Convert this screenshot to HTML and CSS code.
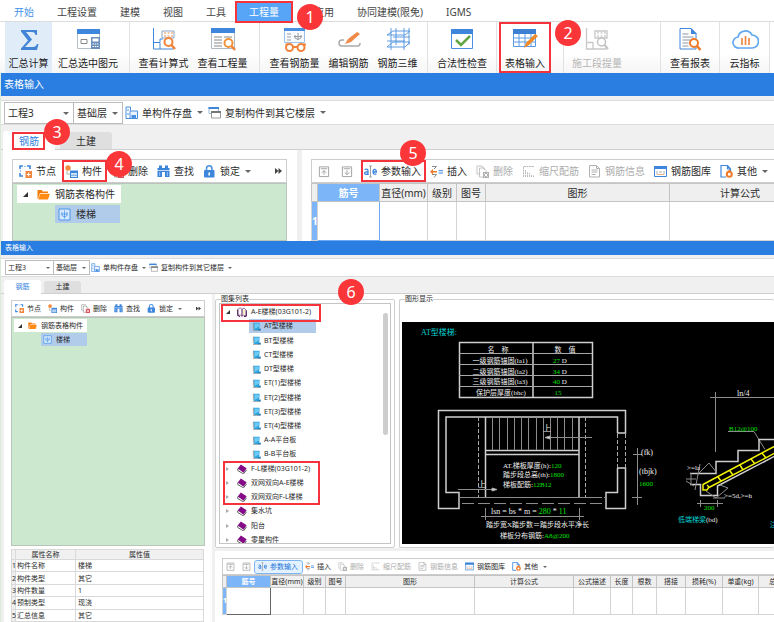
FILE: index.html
```html
<!DOCTYPE html>
<html lang="zh-CN">
<head>
<meta charset="utf-8">
<title>表格输入</title>
<link rel="stylesheet" href="styles.css">
</head>
<body>
<svg class="defs" aria-hidden="true">
  <symbol id="node" viewBox="0 0 13 13"><path d="M1 4V1h3M8 1h3v3M1 8v3h3" fill="none" stroke="#3d86dc" stroke-width="1.600"/><path d="M5 1.500h2M1.500 5v2" stroke="#9cc3ef"/><rect x="6.500" y="6" width="6.500" height="7" fill="#f0843a"/><path d="M9.700 7.500v4M7.700 9.500h4" stroke="#fff"/></symbol>
  <symbol id="part" viewBox="0 0 13 13"><circle cx="3" cy="3" r="2.700" fill="#f08a3c"/><path d="M2 6v3h3" fill="none" stroke="#999" stroke-width=".8"/><rect x="5" y="5.500" width="8" height="7.500" fill="#3d86dc"/><path d="M6 8h6v1.700H6zM6 10.500h6V12H6z" fill="#d9e9fb"/></symbol>
  <symbol id="del" viewBox="0 0 13 13"><path d="M1 1h5l2 2v2M1 1v8h2M3.500 3h4L10 5.500V12H3.500z" fill="#fff" stroke="#8a8a8a" stroke-width=".8"/><rect x="7" y="7" width="6" height="6" fill="#d8505c"/><path d="M8.300 8.300l3.400 3.400m0-3.400l-3.400 3.400" stroke="#fff"/></symbol>
  <symbol id="delg" viewBox="0 0 13 13"><path d="M1 1h5l2 2v2M1 1v8h2M3.500 3h4L10 5.500V12H3.500z" fill="#fff" stroke="#b5b5b5" stroke-width=".8"/><rect x="7" y="7" width="6" height="6" fill="#b0b0b0"/><path d="M8.300 8.300l3.400 3.400m0-3.400l-3.400 3.400" stroke="#fff"/></symbol>
  <symbol id="find" viewBox="0 0 13 13"><path d="M2 .500h3V3h3V.500h3V3h1.500v9H8V7H5v5H.500V3H2z" fill="#3a84da"/><path d="M0 5.500h13" stroke="#fff" stroke-width=".700"/><path d="M2.700 7v4M10.300 7v4" stroke="#9cc6f5"/></symbol>
  <symbol id="lock" viewBox="0 0 13 13"><path d="M3.500 6V3.500a2.700 2.700 0 0 1 5.400 0V6" fill="none" stroke="#4a90e2" stroke-width="1.600"/><rect x="1" y="5" width="10.500" height="7.500" rx="1" fill="#3d86dc"/><path d="M6.200 7.500v3" stroke="#fff" stroke-width="1.600"/></symbol>
  <symbol id="up" viewBox="0 0 13 13"><path d="M1.500 1.500h10v10.500h-10zM3 3.500h7M6.500 10V5.500M4 8l2.500-2.500L9 8" fill="none" stroke="#a0a0a0"/></symbol>
  <symbol id="down" viewBox="0 0 13 13"><path d="M1.500 1.500h10v10.500h-10zM3 3.500h7M6.500 5v5M4 7.500L6.500 10 9 7.500" fill="none" stroke="#a0a0a0"/></symbol>
  <symbol id="ae" viewBox="0 0 13 13"><path d="M.700 4.700Q4 3.300 4 5.800V10M4 6.700Q.500 6.700.600 8.300 1 10.300 4 8.600M9 7h3.400Q12.300 4.300 10.700 4.300 9 4.500 9 7q.200 3 3.400 1.900" fill="none" stroke="#3d86dc" stroke-width="1.300"/><path d="M5.200 1h2.600M6.500 1v11M5.200 12h2.600" stroke="#888" stroke-width=".8" fill="none"/></symbol>
  <symbol id="ins" viewBox="0 0 13 13"><path d="M2 1.500h4.500L4 4M2 9.500h4.500L4 12.500" fill="none" stroke="#888"/><path d="M0 6.700l3-2.700v1.900h4v1.600H3v1.900z" fill="#f07a28"/><path d="M8.500 5.700H13M8.500 8H13" stroke="#3d86dc"/></symbol>
  <symbol id="scale" viewBox="0 0 13 13"><path d="M1.500 12V1.500H12M3.500 12V5M5.500 12V6.500M7.500 12V8M9.500 12V9.500M11.500 12v-1.500" fill="none" stroke="#b8b8b8" stroke-dasharray="2 .7"/></symbol>
  <symbol id="info" viewBox="0 0 13 13"><path d="M1.500.5h7l3 3V12h-10zM8.500.5v3h3M3.500 5h6M3.500 7h6M3.500 9.500h4" fill="none" stroke="#b0b0b0"/></symbol>
  <symbol id="lib" viewBox="0 0 13 13"><path d="M.5 1.500h12v10H.5z" fill="#fff" stroke="#3d86dc"/><path d="M0 1h13v3H0z" fill="#3d86dc"/><path d="M3 6v3.500M10 6v3.500M5 7h3" fill="none" stroke="#999" stroke-width=".8"/><path d="M3 9.500h7" stroke="#f0b48a"/></symbol>
  <symbol id="other" viewBox="0 0 13 13"><path d="M6 12H1V.5h6.500L10.500 4v2M7.500.5V4h3" fill="none" stroke="#3d86dc" stroke-width="1.200"/><circle cx="9.300" cy="9.300" r="2.500" fill="#fff" stroke="#f07a28" stroke-width="2"/><path d="M7.500 6.500l1.800-2 1.800 2" fill="#f07a28"/></symbol>
  <symbol id="save" viewBox="0 0 13 13"><path d="M5 12.500H1V1h4.500v3.500M3 3v2M3 7v2" fill="none" stroke="#4a90e2"/><path d="M5 5h7.500v7.500H5z" fill="#eaf3fd" stroke="#4a90e2"/><path d="M6.500 9h4.500v3.500H6.500z" fill="#4a90e2"/></symbol>
  <symbol id="copy" viewBox="0 0 13 13"><path d="M1 1.500h9.500v6H1z" fill="#fff" stroke="#9db9d8"/><path d="M.5 1H11v2H.5z" fill="#3d86dc"/><path d="M3.500 5.500h9V12h-9z" fill="#fff" stroke="#999"/><path d="M3 5h10v2H3z" fill="#777"/></symbol>
  <symbol id="folder" viewBox="0 0 13 13"><path d="M.5 2h4.200l1 1.500H11V5H3L1 11H.5z" fill="#f47c0c"/><path d="M3.200 5.700h9.600L11 11.500H1.300z" fill="#ff8a14"/></symbol>
  <symbol id="rebar" viewBox="0 0 13 13"><path d="M1 1h11v11H1z" fill="#d5e8fc" stroke="#4a96e6"/><path d="M6.500 2.500v8M3 6h7M4 4v3.500q2.500 3 5 0V4" fill="none" stroke="#4a96e6" stroke-width=".8"/></symbol>
  <symbol id="openbook" viewBox="0 0 13 13"><path d="M1 3l3-2 2.500 2L9 1.500 12 4v8l-3.500-1.500L6.500 12 4.500 10.500 1 11z" fill="#fff" stroke="#5a1a60" stroke-width=".8"/><path d="M6.500 3v9M1 3.500V11l3 1.500M12 4.500V12l-3 .5" fill="none" stroke="#4a1050" stroke-width="1.300"/><path d="M9 4v6" stroke="#e4d860"/></symbol>
  <symbol id="book" viewBox="0 0 13 13"><path d="M5 .5l7.500 5-4 6L1 6z" fill="#850b86"/><path d="M1 6v2.500l7.500 4.300 4-5.300" fill="none" stroke="#222"/><path d="M1.500 7.500L8.500 12" stroke="#eee" stroke-width=".6"/></symbol>
  <symbol id="page" viewBox="0 0 13 13"><path d="M2 1h9l-.5 10.500H3z" fill="#2ba3de"/><path d="M3.500 2h6.500v5l-6.500 3z" fill="#6cc9f3"/><path d="M1.500 12.300h8M2 1v10" stroke="#8a8a8a" fill="none"/><path d="M8 12l4.500-3v3.500z" fill="#146a9f"/></symbol>
</svg>

<header>
  <nav class="menu">
    <a class="blue" href="#">开始</a><a href="#">工程设置</a><a href="#">建模</a><a href="#">视图</a><a href="#">工具</a>
    <a class="current frame" href="#">工程量<b class="badge b1">1</b></a><a href="#">应用</a><a href="#">协同建模(限免)</a><a href="#">IGMS</a>
  </nav>
  <div class="ribbon">
    <div class="group start">
      <button class="on"><svg viewBox="0 0 28 26"><path d="M6 3h16v5h-1.500q-.5-3-3.500-3H11l6 7.500L10 20h8q3 0 4-3h1.500L22 23H6v-1.500l7-8L6 4.500z" fill="#4284d6"/></svg>汇总计算</button>
      <button class="wide"><svg viewBox="0 0 28 26"><path d="M3.500 2.500h22v19h-22z" fill="#fff" stroke="#b4bec8"/><path d="M3 2h23v5H3z" fill="#3d86dc"/><path d="M7 12.500h6v4H7z" fill="none" stroke="#888"/><path d="M17 10h9v12h-9z" fill="#6b8fba"/><path d="M18.500 11.500h6v3h-6z" fill="#fff"/><path d="M18.500 17h6M18.500 19.500h6" stroke="#fff" stroke-dasharray="1.500 .7"/></svg>汇总选中图元</button>
    </div>
    <div class="group">
      <button><svg viewBox="0 0 28 26"><path d="M3.500 1v21h20M3.500 15.500H10V22M10 15v-3h3" fill="none" stroke="#3d86dc"/><path d="M12 4h12v7H12z" fill="#fff" stroke="#8aa5c5"/><path d="M14 6h9M14 9h9" stroke="#e88a45" stroke-dasharray="2 1.500"/><circle cx="18.500" cy="15" r="4" fill="#fff" stroke="#f0843a" stroke-width="2"/><path d="M21.500 18l3.500 4" stroke="#f0843a" stroke-width="2.500"/></svg>查看计算式</button>
      <button><svg viewBox="0 0 28 26"><path d="M2.500 1.500h23v20h-23z" fill="#fff" stroke="#b0b8c2"/><path d="M2 1h24v5H2z" fill="#3d86dc"/><path d="M5 10h8M5 13h8M5 16h8M5 19h8M15 10h8" stroke="#888"/><circle cx="19.500" cy="16" r="4" fill="#fff" stroke="#f0943a" stroke-width="2"/><path d="M22.500 19l3.500 4" stroke="#f0843a" stroke-width="2.500"/></svg>查看工程量</button>
    </div>
    <div class="group">
      <button><svg viewBox="0 0 28 26"><path d="M3.500 1.500h20v14h-20z" fill="#f8fbfe" stroke="#9cc0e8"/><path d="M3 1h21v3H3z" fill="#4a90e2"/><path d="M6 7h4M6 10h4M6 13h4M13 9.500h8M17 6v7M14 8v3q3 3 6 0V8" fill="none" stroke="#888" stroke-width=".8"/><path d="M4.500 17.500h3M22 17.500h3M12 20h4" stroke="#f0843a" stroke-width="2"/><circle cx="8.500" cy="20.500" r="3.500" fill="#fff" stroke="#f0843a" stroke-width="2"/><circle cx="20" cy="20.500" r="3.500" fill="#fff" stroke="#f0843a" stroke-width="2"/></svg>查看钢筋量</button>
      <button><svg viewBox="0 0 28 26"><path d="M9 13H7a3 3 0 0 0 0 6h16q2 0 2-3" fill="none" stroke="#aaa" stroke-width="1.500"/><path d="M10 17l3-5L22 5l3 2-9 8z" fill="#f08a48"/></svg>编辑钢筋</button>
      <button><svg viewBox="0 0 28 26"><path d="M7 1v22M12 1v17M20 1v22M25 1v17M3 8h18l5-4H9zM3 20h18l5-5H9zM3 14h18M9 10h17" fill="none" stroke="#4f92de" stroke-width=".9"/></svg>钢筋三维</button>
    </div>
    <div class="group">
      <button><svg viewBox="0 0 28 26"><path d="M3.500 2.500h21v19h-21z" fill="#fff" stroke="#4a90e2"/><path d="M3 2h22v5H3z" fill="#3d86dc"/><path d="M8 13l5 5 9-9" fill="none" stroke="#62a744" stroke-width="2.500"/></svg>合法性检查</button>
    </div>
    <div class="group">
      <button class="frame"><svg viewBox="0 0 28 26"><path d="M2.500 2.500h22v17h-22zM2 11h22M2 15h22M8 6v14M14 6v14M20 6v14" fill="none" stroke="#5a9ae4"/><path d="M2 2h23v5H2z" fill="#3d7fd0"/><path d="M13 21l2-5 9-9 3 2-9 9z" fill="#f08a28"/></svg>表格输入<b class="badge b2">2</b></button>
    </div>
    <div class="group">
      <button disabled><svg viewBox="0 0 28 26"><path d="M3.500 1v21h20M3.500 15.500H10V22M12 4h12v7H12z" fill="none" stroke="#c8c8c8" stroke-width="1.300"/><path d="M14 6h9M14 9h9" stroke="#bbb" stroke-dasharray="2 1.500"/><circle cx="18.500" cy="15" r="4" fill="#fff" stroke="#c2c2c2" stroke-width="1.500"/><path d="M21.500 18l3.500 4" stroke="#c2c2c2" stroke-width="2"/></svg>施工段提量</button>
    </div>
    <div class="group">
      <button><svg viewBox="0 0 28 26"><path d="M4 1.500h11l5 5V22H4z" fill="#fff" stroke="#3d86dc"/><path d="M15 1v6h6" fill="#3d86dc"/><path d="M6.500 7h6M6.500 10h11M6.500 13h8M6.500 16h6M6.500 19h6" stroke="#8a96a5"/><circle cx="18" cy="16" r="4" fill="#fff" stroke="#f07a28" stroke-width="2"/><path d="M21 19l3.500 4" stroke="#f07a28" stroke-width="2.500"/></svg>查看报表</button>
    </div>
    <div class="group">
      <button><svg viewBox="0 0 28 26"><path d="M8 21a5.500 5.500 0 0 1-1-11 7.500 7.500 0 0 1 14-2A6.500 6.500 0 0 1 21 21z" fill="#fff" stroke="#62a8ef" stroke-width="1.700"/><path d="M11 11v7M14.500 9v9M18 11v7" stroke="#f08a48" stroke-width="1.700"/></svg>云指标</button>
    </div>
  </div>
</header>

<section class="window large">
  <h1>表格输入</h1>
  <div class="quick">
    <label class="pick p1"><select aria-label="工程"><option>工程3</option></select></label>
    <label class="pick p2"><select aria-label="楼层"><option>基础层</option></select></label>
    <button><svg><use href="#save"/></svg>单构件存盘<i></i></button>
    <button><svg><use href="#copy"/></svg>复制构件到其它楼层<i></i></button>
  </div>
  <div class="tabs"><button class="sel frame">钢筋<b class="badge b3">3</b></button><button>土建</button></div>
  <div class="work">
    <div class="left">
      <div class="bar">
        <button><svg><use href="#node"/></svg>节点</button>
        <button class="frame"><svg><use href="#part"/></svg>构件<b class="badge b4">4</b></button>
        <button><svg><use href="#del"/></svg>删除</button>
        <button><svg><use href="#find"/></svg>查找</button>
        <button><svg><use href="#lock"/></svg>锁定<i></i></button>
        <span class="more"></span>
      </div>
      <div class="tree">
        <div class="root"><em></em><svg><use href="#folder"/></svg>钢筋表格构件</div>
        <div class="leaf"><svg><use href="#rebar"/></svg>楼梯</div>
      </div>
    </div>
    <div class="right">
      <div class="inputs">
        <div class="bar">
          <button class="arrow" aria-label="上移"><svg><use href="#up"/></svg></button>
          <button class="arrow" aria-label="下移"><svg><use href="#down"/></svg></button>
          <button class="frame"><svg><use href="#ae"/></svg>参数输入<b class="badge b5">5</b></button>
          <button><svg><use href="#ins"/></svg>插入</button>
          <button disabled><svg><use href="#delg"/></svg>删除</button>
          <button disabled><svg><use href="#scale"/></svg>缩尺配筋</button>
          <button disabled><svg><use href="#info"/></svg>钢筋信息</button>
          <button><svg><use href="#lib"/></svg>钢筋图库</button>
          <button><svg><use href="#other"/></svg>其他<i></i></button>
        </div>
        <table class="grid">
          <thead><tr><th></th><th>筋号</th><th>直径(mm)</th><th>级别</th><th>图号</th><th>图形</th><th>计算公式</th></tr></thead>
          <tbody><tr><th>1</th><td></td><td></td><td></td><td></td><td></td><td></td></tr></tbody>
        </table>
      </div>
    </div>
  </div>
</section>

<section class="window compact">
  <h1>表格输入</h1>
  <div class="quick">
    <label class="pick p1"><select aria-label="工程"><option>工程3</option></select></label>
    <label class="pick p2"><select aria-label="楼层"><option>基础层</option></select></label>
    <button><svg><use href="#save"/></svg>单构件存盘<i></i></button>
    <button><svg><use href="#copy"/></svg>复制构件到其它楼层<i></i></button>
  </div>
  <div class="tabs"><button class="sel">钢筋</button><button>土建</button></div>
  <div class="work">
    <div class="left">
      <div class="bar">
        <button><svg><use href="#node"/></svg>节点</button>
        <button><svg><use href="#part"/></svg>构件</button>
        <button><svg><use href="#del"/></svg>删除</button>
        <button><svg><use href="#find"/></svg>查找</button>
        <button><svg><use href="#lock"/></svg>锁定<i></i></button>
        <span class="more"></span>
      </div>
      <div class="tree">
        <div class="root"><em></em><svg><use href="#folder"/></svg>钢筋表格构件</div>
        <div class="leaf"><svg><use href="#rebar"/></svg>楼梯</div>
      </div>
      <table class="props">
        <thead><tr><th></th><th>属性名称</th><th>属性值</th></tr></thead>
        <tbody>
          <tr><th>1</th><td>构件名称</td><td>楼梯</td></tr>
          <tr><th>2</th><td>构件类型</td><td>其它</td></tr>
          <tr><th>3</th><td>构件数量</td><td>1</td></tr>
          <tr><th>4</th><td>预制类型</td><td>现浇</td></tr>
          <tr><th>5</th><td>汇总信息</td><td>其它</td></tr>
        </tbody>
      </table>
    </div>
    <div class="right">
      <div class="panes">
        <fieldset class="atlas">
          <legend>图集列表</legend>
          <b class="badge b6">6</b>
          <div class="listbox">
            <ul>
              <li class="book open"><em></em><svg><use href="#openbook"/></svg>A-E楼梯(03G101-2)</li>
              <li class="chosen"><svg><use href="#page"/></svg>AT型楼梯</li>
              <li><svg><use href="#page"/></svg>BT型楼梯</li>
              <li><svg><use href="#page"/></svg>CT型楼梯</li>
              <li><svg><use href="#page"/></svg>DT型楼梯</li>
              <li><svg><use href="#page"/></svg>ET(1)型楼梯</li>
              <li><svg><use href="#page"/></svg>ET(2)型楼梯</li>
              <li><svg><use href="#page"/></svg>ET(3)型楼梯</li>
              <li><svg><use href="#page"/></svg>ET(4)型楼梯</li>
              <li><svg><use href="#page"/></svg>A-A平台板</li>
              <li><svg><use href="#page"/></svg>B-B平台板</li>
              <li class="book marked"><em></em><svg><use href="#book"/></svg>F-L楼梯(03G101-2)</li>
              <li class="book"><em></em><svg><use href="#book"/></svg>双网双向A-E楼梯</li>
              <li class="book"><em></em><svg><use href="#book"/></svg>双网双向F-L楼梯</li>
              <li class="book"><em></em><svg><use href="#book"/></svg>集水坑</li>
              <li class="book"><em></em><svg><use href="#book"/></svg>阳台</li>
              <li class="book"><em></em><svg><use href="#book"/></svg>零星构件</li>
            </ul>
            <span class="thumb"></span>
          </div>
        </fieldset>
        <fieldset class="drawing">
          <legend>图形显示</legend>
          <svg viewBox="402 322 372 222" preserveAspectRatio="xMinYMin slice" role="img" aria-label="AT型楼梯">
            <text class="cy t8" x="421" y="335">AT型楼梯:</text>
            <g class="ln">
              <path class="wall" d="M459.500 342.500h133v55h-133zM533 342v55"/>
              <path d="M459 353.500h133M459 364.500h133M459 375.500h133M459 386.500h133"/>
              <path class="wall" d="M617 433h8.500V410.500h-187V508.500H459V492.500H446V417H617.500V433M617 468h8.500v40.500H606V492.500h11.500V468"/>
              <path class="wall" d="M485.500 417v80M579 417v80M485 450.500h94M485 454.500h94"/>
              <path stroke-dasharray="4 2" d="M478.500 417v80M585.500 417v80M617.500 434v34M625.500 434v34"/>
              <path class="dim" d="M492.500 417v33M499.500 417v33M507.500 417v33M514.500 417v33M521.500 417v33M528.500 417v33M536.500 417v33M543.500 417v33M550.500 417v33M557.500 417v33M564.500 417v33M572.500 417v33"/>
              <path class="dim" d="M546 437.500h46M458 489.500h38M459 497.500h143M604 497.500h2"/>
              <path class="fill" d="M545 437.500l5-1.500v3zM497 489.500l-5-1.500v3z"/>
              <path class="dim" stroke-dasharray="12 4" d="M462 503.500h143"/>
              <path class="dim" d="M481 516.500h103M485.500 508v12M579.500 508v12M637.500 448v57M633 454.500h9M632 497.500h10M710 397.500h64M715.500 392v60M728 431.500h26l11 18"/>
              <path class="wall" d="M690 473.500h26v-12h22v-11h21v-11h16M690 484.500h10.500v11h17V486L775 456"/>
              <path class="dim" d="M697 503.500h26M700.500 500v7M717.500 500v7M691 473v12M686 479h10M695 490l5-26M698 474l11-11 8 10M686 481l8 5M706 491l10 7 12-10-8-3M713 498h12"/>
            </g>
            <g fill="none" stroke="#f2f200" stroke-width="1.500">
              <path d="M703 484.500L775 446M708 488l67-35M703 484v6h4q3-3 0-5M718 477l3 4M730 471l3 4M740 465l3 5M751 459l4 5M762 453l4 5"/>
            </g>
            <g class="mid">
              <text x="498" y="352">名　称</text><text x="565" y="352">数　值</text>
              <text x="500" y="363">一级钢筋锚固(la1)</text><text x="500" y="374">二级钢筋锚固(la2)</text><text x="500" y="384">三级钢筋锚固(la3)</text><text x="501" y="395">保护层厚度(bhc)</text>
              <text x="560" y="363"><tspan class="gr">27</tspan> D</text><text x="560" y="374"><tspan class="gr">34</tspan> D</text><text x="560" y="384"><tspan class="gr">40</tspan> D</text><text class="gr" x="558" y="395">15</text>
            </g>
            <text class="t8" x="543" y="431">上</text><text class="t8" x="478" y="487">上</text>
            <text x="503" y="468">AT.梯板厚度(h):<tspan class="gr">120</tspan></text>
            <text x="503" y="477">踏步段总高(th):<tspan class="gr">1800</tspan></text>
            <text x="503" y="487">梯板配筋:<tspan class="gr">12B12</tspan></text>
            <text class="t8" x="491" y="514">lsn = bs * m = <tspan class="gr">280</tspan> * <tspan class="gr">11</tspan></text>
            <text x="486" y="527">踏步宽X踏步数＝踏步段水平净长</text>
            <text x="500" y="538">梯板分布钢筋:<tspan class="gr">A8@200</tspan></text>
            <text class="t8" x="641" y="455">(fk)</text><text class="t8" x="639" y="474">(tbjk)</text><text class="gr" x="639" y="486">1600</text>
            <text class="t8" x="737" y="396">ln/4</text><text class="gr" x="729" y="431">B12@100</text>
            <text x="687" y="470">&gt;=la</text><text x="724" y="498">&gt;=5d,&gt;=h</text><text class="gr" x="704" y="510">200</text>
            <text x="678" y="522"><tspan class="cy">低端梯梁</tspan>(bd)</text><text class="cy" x="770" y="527">注</text>
          </svg>
        </fieldset>
      </div>
      <div class="inputs">
        <div class="bar">
          <button class="arrow" aria-label="上移"><svg><use href="#up"/></svg></button>
          <button class="arrow" aria-label="下移"><svg><use href="#down"/></svg></button>
          <button class="pressed"><svg><use href="#ae"/></svg>参数输入</button>
          <button><svg><use href="#ins"/></svg>插入</button>
          <button disabled><svg><use href="#delg"/></svg>删除</button>
          <button disabled><svg><use href="#scale"/></svg>缩尺配筋</button>
          <button disabled><svg><use href="#info"/></svg>钢筋信息</button>
          <button><svg><use href="#lib"/></svg>钢筋图库</button>
          <button><svg><use href="#other"/></svg>其他<i></i></button>
        </div>
        <table class="grid">
          <thead><tr><th></th><th>筋号</th><th>直径(mm)</th><th>级别</th><th>图号</th><th>图形</th><th>计算公式</th><th>公式描述</th><th>长度</th><th>根数</th><th>搭接</th><th>损耗(%)</th><th>单重(kg)</th><th class="cut">总重(kg)</th></tr></thead>
          <tbody><tr><th>1</th><td></td><td></td><td></td><td></td><td></td><td></td><td></td><td></td><td></td><td></td><td></td><td></td><td></td></tr></tbody>
        </table>
      </div>
    </div>
  </div>
</section>
</body>
</html>
```
FILE: styles.css
```css
* { box-sizing: border-box; }
body {
  margin: 0;
  height: 100vh;
  display: flex;
  flex-direction: column;
  overflow: hidden;
  background: #fff;
  color: #2b2b2b;
  font: 10px/14px "Noto Sans", "Noto Sans CJK SC", sans-serif;
}
button, select { font: inherit; color: inherit; border: 0; background: none; padding: 0; margin: 0; }
button { display: flex; align-items: center; white-space: nowrap; }
a { color: #444; text-decoration: none; white-space: nowrap; }
svg { display: block; flex: none; }
.defs { position: absolute; width: 0; height: 0; }

/* numbered callouts */
.frame { position: relative; }
.frame::after { content: ""; position: absolute; inset: -2px; border: 2px solid #f5333a; pointer-events: none; }
.badge {
  position: absolute; z-index: 5; width: 26px; height: 26px; border-radius: 50%;
  background: #fb3638; color: #fff; font-size: 16px; line-height: 26px; font-weight: 400; text-align: center;
}
.b1 { left: 60px; top: 1px; }
.b2 { left: 54px; top: -4px; }
.b3 { left: 41px; top: -12px; }
.b4 { left: 41px; top: -10px; }
.b5 { left: 36px; top: -21px; }
.b6 { left: 122px; top: -24px; }

.menu { display: flex; align-items: center; gap: 23px; height: 22px; padding: 3px 0 0 14px; border-bottom: 1px solid #dcdcdc; }
.menu .blue { color: #3f8fe8; }
.menu .current { background: #57a5f7; color: #fff; padding: 2px 12px; margin-left: -12px; }
.ribbon { display: flex; height: 51px; }
.ribbon .group { display: flex; justify-content: center; gap: 9px; border-right: 1px solid #e2e2e2; background: linear-gradient(#fff 60%, #f6f6f6); }
.ribbon .group:nth-child(1) { width: 130px; }
.ribbon .group:nth-child(2) { width: 130px; padding-right: 3px; }
.ribbon .group:nth-child(3) { width: 168px; }
.ribbon .group:nth-child(4) { width: 69px; }
.ribbon .group:nth-child(5) { width: 67px; }
.ribbon .group:nth-child(6) { width: 97px; justify-content: flex-start; padding-left: 8px; }
.ribbon .group:nth-child(7) { width: 59px; }
.ribbon .group:nth-child(8) { width: 50px; }
.ribbon .start { gap: 0; }
.ribbon button { flex-direction: column; gap: 3px; padding-top: 5px; color: #222; }
.ribbon .on { background: #e1ecf9; width: 47px; }
.ribbon .wide { width: 72px; }
.ribbon .frame { padding: 3px 4px 0; margin: 2px 10px 2px 0; }
.ribbon button:disabled { color: #b5b5b5; }
.ribbon svg { width: 28px; height: 26px; }

.window { --icon: 13px; --in: 4px; --gap: 9px; --barh: 24px; display: flex; flex-direction: column; border-left: 1px solid #d8ead9; background: #f0f0f0; flex: none; }
.compact { --icon: 9px; --in: 3px; --gap: 7px; --barh: 17px; font-size: 7px; line-height: 10px; flex: 1; min-height: 0; }
h1 { margin: 0; font: inherit; color: #fff; background: #2b7ee1; height: 23px; line-height: 22px; padding-left: 3px; }
.compact h1 { height: 14px; line-height: 13px; padding-left: 4px; }

.quick { display: flex; align-items: center; margin-top: 4px; height: 25px; background: #fff; border: solid #dcdcdc; border-width: 1px 0; padding-left: 3px; }
.compact .quick { margin-top: 3px; height: 19px; padding-left: 4px; }
.quick svg, .bar svg { width: var(--icon); height: var(--icon); margin-right: var(--in); }
.quick button { margin-left: 2px; }
.compact .quick button { margin-left: 1px; }
.quick i { margin: 0 3px 0 5px; }
.compact .quick i { margin: 0 2px 0 4px; }
i { width: 0; height: 0; border: solid transparent; border-width: 3px 3px 0; border-top-color: #666; margin-left: 5px; }
.compact i { border-width: 2px 2px 0; }
.pick { position: relative; display: flex; border: 1px solid #bcbcbc; height: 22px; }
.pick + .pick { border-left: 0; }
.pick select { appearance: none; width: 100%; padding: 0 3px; border-radius: 0; }
.pick::after { content: ""; position: absolute; right: 4px; top: 50%; border: solid transparent; border-width: 3px 3px 0; border-top-color: #666; pointer-events: none; margin-top: -1px; }
.compact .pick::after { border-width: 2px 2px 0; right: 3px; }
.p1 { width: 70px; } .p2 { width: 49px; }
.compact .pick { height: 15px; }
.compact .p1 { width: 49px; } .compact .p2 { width: 36px; }
.compact .pick select { padding: 0 2px; }

.tabs { display: flex; align-items: flex-end; gap: 5px; height: 25px; padding-left: 2px; border-bottom: 1px solid #cfcfcf; }
.tabs button { width: 52px; height: 17px; justify-content: center; background: #dfdfdf; border-radius: 3px 3px 0 0; }
.tabs .sel { background: #fff; color: #3381dd; height: 19px; margin-bottom: -1px; }
.tabs .frame::after { inset: 1px 10px 0 9px; }
.compact .tabs { height: 17px; gap: 3px; padding-left: 3px; }
.compact .tabs button { width: 37px; height: 12px; }
.compact .tabs .sel { height: 14px; }

.work { display: flex; min-height: 0; }
.large .work { height: 91px; }
.compact .work { flex: 1; }
.left { flex: none; display: flex; flex-direction: column; width: 294px; margin: 0 5px 0 2px; padding: 9px 10px 0 9px; background: #fff; }
.compact .left { width: 208px; margin: 0 3px 0 3px; padding: 6px 7px 0; }
.right { flex: 1; min-width: 0; display: flex; flex-direction: column; background: #fff; }
.bar { display: flex; align-items: center; gap: var(--gap); height: var(--barh); border: 1px solid #cdcdcd; flex: none; padding-left: 6px; background: #fff; }
.compact .bar { padding-left: 3px; }
.bar button { height: 20px; }
.compact .bar button { height: 12px; }
.bar button:disabled { color: #adadad; }
.bar .frame::after { inset: -1px -5px -1px -3px; }
.more { margin-left: auto; margin-right: 4px; width: 7px; height: 6px; background: #444; clip-path: polygon(0 0, 50% 50%, 50% 0, 100% 50%, 50% 100%, 50% 50%, 0 100%); }
.compact .more { width: 5px; height: 4px; margin-right: 3px; }
.tree { flex: 1; background: #cce8cf; border: 1px solid #b9c4ba; padding: 1px 4px; display: flex; flex-direction: column; align-items: flex-start; gap: 2px; }
.root, .leaf { display: flex; align-items: center; height: 18px; }
.root { background: #fff; width: 104px; padding-left: 6px; }
.leaf { background: #b1cbeb; width: 65px; margin-left: 38px; padding-left: 3px; }
.tree svg { width: 13px; height: 13px; margin-right: 5px; }
em { flex: none; width: 0; height: 0; border: solid transparent; border-width: 0 0 5px 5px; border-bottom-color: #333; margin-right: 9px; }
.compact .tree { padding: 1px 2px; gap: 1px; }
.compact .root, .compact .leaf { height: 13px; }
.compact .root { width: 73px; padding-left: 4px; }
.compact .leaf { width: 46px; margin-left: 27px; padding-left: 2px; }
.compact .tree svg { width: 9px; height: 9px; margin-right: 4px; }
.compact em { border-width: 0 0 4px 4px; margin-right: 6px; }

table { border-collapse: collapse; table-layout: fixed; }
th { font-weight: 400; padding: 0; white-space: nowrap; }
td { padding: 0; }
.inputs { padding: 9px 0 0 9px; overflow-x: clip; }
.inputs .bar { border-right: 0; }
.arrow { margin-right: 2px; }
.large .arrow svg { margin-right: 0; width: 12px; }
.compact .arrow svg { margin-right: 0; }
.compact .arrow { margin-right: 0; }
.grid { width: 500px; }
.grid th, .grid td { border: 1px solid #d4d4d4; }
.grid thead th { background: #efefef; height: 18px; border-color: #c4c4c4; }
.grid tbody tr { height: 39px; }
.grid th:nth-child(1) { width: 6px; }
.grid th:nth-child(2) { width: 62px; }
.grid th:nth-child(3) { width: 48px; }
.grid th:nth-child(4), .grid th:nth-child(5) { width: 29px; }
.grid th:nth-child(6) { width: 184px; }
.grid thead th:nth-child(2), .grid tbody th { background: #7cb6f8; color: #fff; font-weight: 700; }
.large .grid td:nth-child(2) { border: 1px solid #6aabf4; }
.compact .inputs { padding: 7px 0 0 7px; }
.compact .grid { width: 584px; }
.compact .grid thead th { height: 12px; }
.compact .grid tbody tr { height: 27px; }
.compact .grid th:nth-child(1) { width: 4px; }
.compact .grid th:nth-child(2) { width: 44px; }
.compact .grid th:nth-child(3) { width: 33px; }
.compact .grid th:nth-child(4) { width: 22px; }
.compact .grid th:nth-child(5) { width: 20px; }
.compact .grid th:nth-child(6) { width: 129px; }
.compact .grid th:nth-child(7) { width: 99px; }
.compact .grid th:nth-child(8) { width: 37px; }
.compact .grid th:nth-child(9) { width: 22px; }
.compact .grid th:nth-child(10) { width: 24px; }
.compact .grid th:nth-child(11) { width: 29px; }
.compact .grid th:nth-child(12) { width: 37px; }
.compact .grid th:nth-child(13) { width: 36px; }
.compact .grid td:nth-child(2) { border: 1px solid #666; }
.bar .pressed { background: #e4f1ff; color: #2274d8; outline: 1px solid #7db5f2; border-radius: 2px; padding: 0 4px 0 3px; margin: 0 -4px 0 -3px; }

.props { width: 193px; height: 73px; margin-top: 3px; flex: none; }
.props th, .props td { border: 1px solid #d9d9d9; line-height: 9px; }
.props th { background: #f0f0f0; }
.props td { padding-left: 1px; }
.props td:last-child { padding-left: 2px; }
.props th:nth-child(1) { width: 4px; }
.props th:nth-child(2) { width: 60px; }

.panes { display: flex; gap: 4px; height: 257px; flex: none; padding-top: 1px; border-bottom: 3px solid #f0f0f0; }
fieldset { min-width: 0; margin: 0; border: 1px solid #cfcfcf; border-radius: 2px; padding: 0 3px 3px; height: 253px; }
legend { padding: 0; margin-left: 2px; line-height: 8px; }
.atlas { position: relative; width: 180px; flex: none; }
.drawing { flex: 1; border-right: 0; padding: 0 0 3px 2px; }
.drawing legend { margin-left: 3px; }
.drawing > svg { width: 100%; height: 222px; margin-top: 19px; background: #000; }
.listbox { display: flex; justify-content: space-between; height: 241px; border: 1px solid #c4c4c4; overflow: hidden; }
.thumb { width: 5px; height: 122px; margin: 9px 2px; border-radius: 3px; background: #cdcdcd; }
ul { list-style: none; margin: 0; padding: 1px 0 0 3px; height: 243px; flex: none; display: flex; flex-direction: column; }
li { flex: 1; display: flex; align-items: center; margin-left: 26px; padding-left: 3px; width: 67px; white-space: nowrap; }
li svg { width: 9px; height: 9px; margin-right: 3px; }
.chosen { background: #b1cbeb; }
.book { position: relative; margin-left: 0; padding-left: 3px; width: 97px; }
.book svg { width: 10px; height: 10px; margin-right: 4px; }
.book em { border-width: 2px 0 2px 3px; border-color: transparent transparent transparent #aaa; margin-right: 8px; }
.book.open em { border-width: 0 0 4px 4px; border-color: transparent transparent #333; margin-right: 7px; }
.open::after, .marked::after { content: ""; position: absolute; inset: -1px -1px -3px -2px; border: 2px solid #f5333a; z-index: 1; }
.marked::after { inset: -1px 0 -29px 0; }

.drawing text { fill: #eee; font: 7px/1 "Liberation Serif", "Noto Sans CJK SC", serif; white-space: pre; }
.drawing .t8 { font-size: 8px; }
.drawing .mid text { text-anchor: middle; }
.drawing .gr { fill: #00e000; }
.drawing .cy { fill: #00d2d2; }
.ln path { fill: none; stroke: #a8a8a8; }
.ln .wall { stroke: #cfcfcf; stroke-width: 1.5; }
.ln .dim { stroke: #8c8c8c; }
.ln .fill { fill: #ddd; }
```
